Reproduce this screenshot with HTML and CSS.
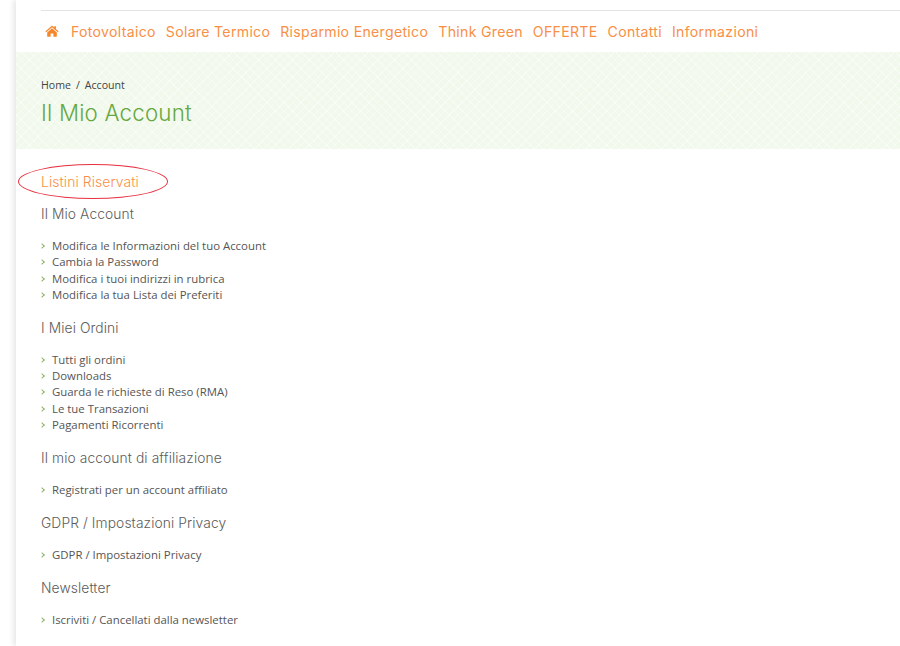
FILE: index.html
```html
<!DOCTYPE html>
<html lang="it">
<head>
<meta charset="utf-8">
<title>Il Mio Account</title>
<link rel="stylesheet" href="styles.css">
</head>
<body>
<div class="page">
  <div class="topbar">
    <nav class="nav">
      <a class="home" href="#"><svg viewBox="0 0 16 14" width="14" height="12"><path fill="#f7862a" d="M8 0.6 L10.6 2.9 V1.4 H12.6 V4.7 L15.8 7.5 L14.8 8.6 L8 2.7 L1.2 8.6 L0.2 7.5 Z M8 3.9 L13.6 8.7 V13.6 H9.6 V9.8 H6.4 V13.6 H2.4 V8.7 Z"/></svg></a>
      <a href="#">Fotovoltaico</a>
      <a href="#">Solare Termico</a>
      <a href="#">Risparmio Energetico</a>
      <a href="#">Think Green</a>
      <a href="#">OFFERTE</a>
      <a href="#">Contatti</a>
      <a href="#">Informazioni</a>
    </nav>
  </div>
  <header class="band">
    <div class="crumbs"><span>Home</span><span>/</span><span>Account</span></div>
    <h1>Il Mio Account</h1>
  </header>
  <main class="content">
    <div class="reserved"><a href="#">Listini Riservati</a><span class="ring"></span></div>
    <section>
      <h2>Il Mio Account</h2>
      <ul>
        <li>Modifica le Informazioni del tuo Account</li>
        <li>Cambia la Password</li>
        <li>Modifica i tuoi indirizzi in rubrica</li>
        <li>Modifica la tua Lista dei Preferiti</li>
      </ul>
    </section>
    <section>
      <h2>I Miei Ordini</h2>
      <ul>
        <li>Tutti gli ordini</li>
        <li>Downloads</li>
        <li>Guarda le richieste di Reso (RMA)</li>
        <li>Le tue Transazioni</li>
        <li>Pagamenti Ricorrenti</li>
      </ul>
    </section>
    <section>
      <h2>Il mio account di affiliazione</h2>
      <ul><li>Registrati per un account affiliato</li></ul>
    </section>
    <section>
      <h2>GDPR / Impostazioni Privacy</h2>
      <ul><li>GDPR / Impostazioni Privacy</li></ul>
    </section>
    <section>
      <h2>Newsletter</h2>
      <ul><li>Iscriviti / Cancellati dalla newsletter</li></ul>
    </section>
  </main>
</div>
</body>
</html>
```
FILE: styles.css
```css
html, body {
  margin: 0;
  padding: 0;
  height: 646px;
  overflow: hidden;
  background: #fff;
}
.page {
  margin-left: 16px;
  height: 646px;
  background: #fff;
  box-shadow: -3px 0 5px rgba(0, 0, 0, 0.09);
  font-family: "Open Sans", sans-serif;
}
.topbar {
  padding: 10px 0 0 25px;
}
.nav {
  display: flex;
  align-items: center;
  gap: 10px;
  height: 40px;
  border-top: 1px solid #e4e4e4;
  font-family: "Inter", sans-serif;
  font-size: 14.1px;
  letter-spacing: 0.31px;
}
.nav a {
  color: #f98f45;
  text-decoration: none;
}
.nav .home {
  display: flex;
  margin: 0 2px 0 4px;
}
.band {
  height: 97px;
  margin-top: 1px;
  padding-left: 25px;
  box-sizing: border-box;
  background-color: #f1f8ec;
  background-image:
    repeating-linear-gradient(45deg, rgba(255, 255, 255, 0.4) 0 1px, transparent 1px 6px),
    repeating-linear-gradient(-45deg, rgba(255, 255, 255, 0.4) 0 1px, transparent 1px 6px);
}
.crumbs {
  display: flex;
  gap: 5px;
  padding-top: 25px;
  font-size: 10.6px;
  line-height: 16px;
  color: #444;
}
h1 {
  margin: 4px 0 0;
  font-family: "Inter", sans-serif;
  font-weight: 300;
  font-size: 22.3px;
  line-height: 32px;
  letter-spacing: 0.2px;
  color: #66a83f;
}
.content {
  padding: 23px 0 0 25px;
}
.reserved {
  position: relative;
  height: 20px;
  font-family: "Inter", sans-serif;
  font-weight: 300;
  font-size: 13.9px;
  line-height: 20px;
  letter-spacing: 0.1px;
}
.reserved a {
  color: #f98f45;
  text-decoration: none;
}
.ring {
  position: absolute;
  left: -23px;
  top: -8px;
  width: 148px;
  height: 33px;
  border: 1px solid #e8303f;
  border-radius: 50%;
}
section {
  margin-top: 12px;
}
section + section {
  margin-top: 14.7px;
}
h2 {
  margin: 0;
  font-family: "Inter", sans-serif;
  font-weight: 300;
  font-size: 13.8px;
  line-height: 20px;
  letter-spacing: 0.1px;
  color: #5c5c5c;
}
ul {
  margin: 14px 0 0;
  padding: 0;
  list-style: none;
}
li {
  position: relative;
  padding-left: 11px;
  font-size: 11.4px;
  line-height: 16.28px;
  color: #555;
}
li::before {
  content: "";
  position: absolute;
  left: -1px;
  top: 6px;
  width: 3px;
  height: 3px;
  border-top: 1px solid #8fb36c;
  border-right: 1px solid #8fb36c;
  transform: rotate(45deg);
}
```
